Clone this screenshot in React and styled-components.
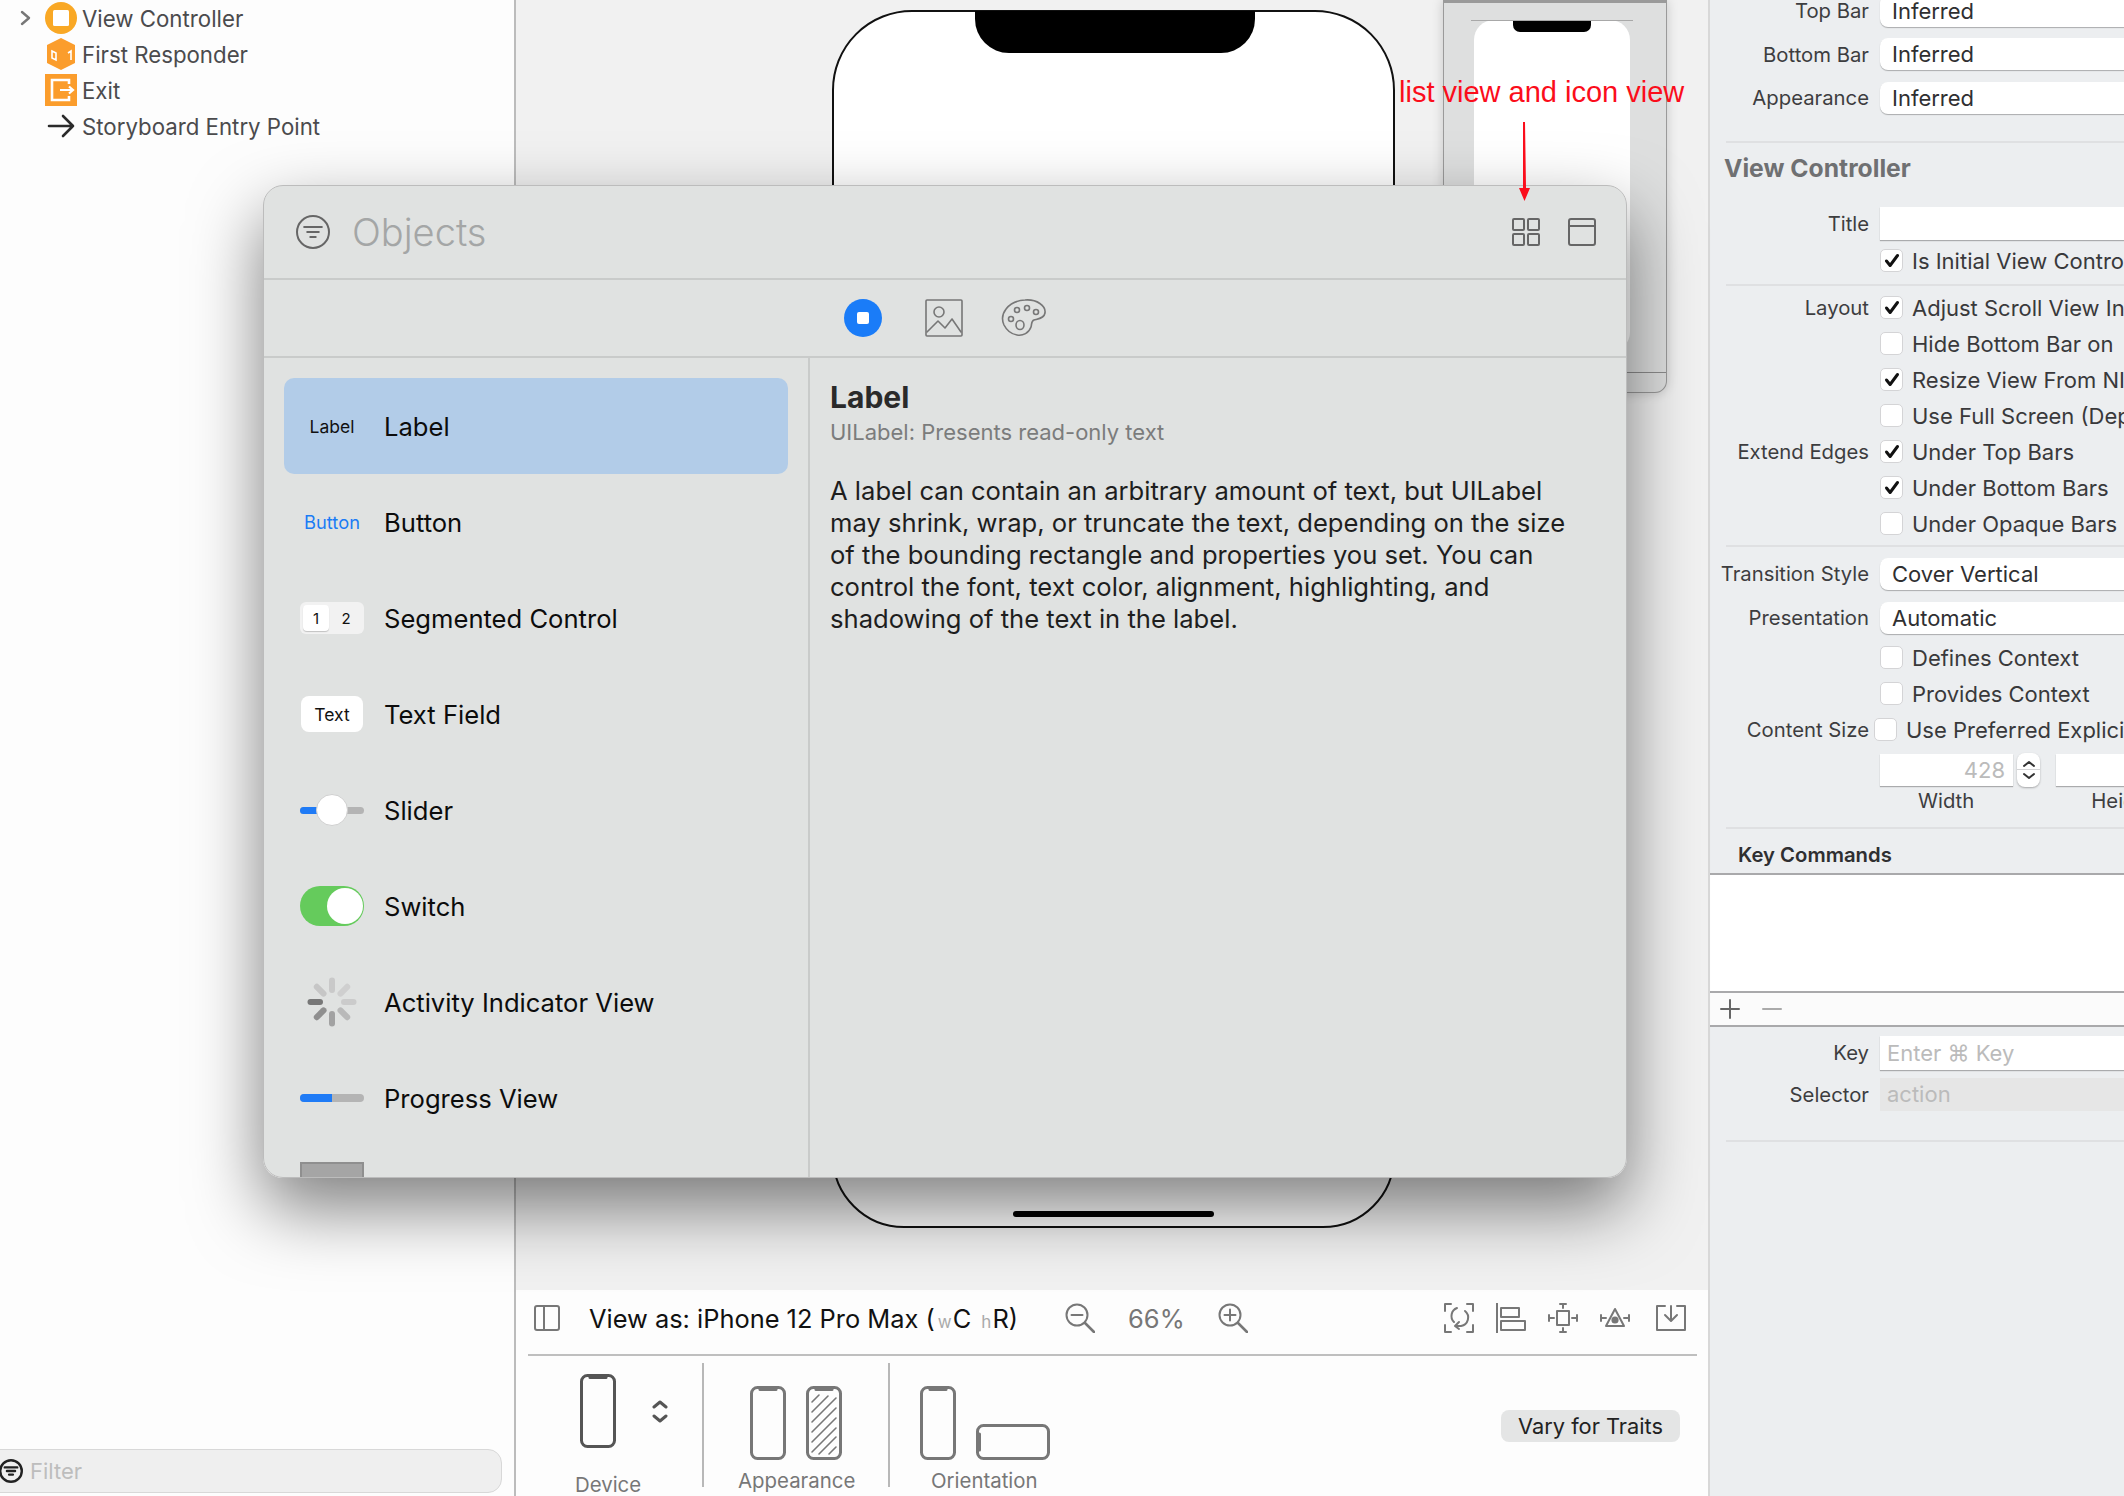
import React from 'react';
import styled, { createGlobalStyle } from 'styled-components';

const GlobalStyle = createGlobalStyle`
  html, body {
    margin: 0;
    padding: 0;
    background: #fff;
  }

  * {
    box-sizing: border-box;
  }
`;

const Shell = styled.div`
  position: relative;
  display: grid;
  grid-template-columns: 516px 1194px 414px;
  width: 2124px;
  height: 1496px;
  overflow: hidden;
  font-family: Inter, 'Liberation Sans', sans-serif;
`;

/* navigator */
const Navigator = styled.aside`
  display: flex;
  flex-direction: column;
  justify-content: space-between;
  background: #fdfdfd;
  border-right: 2px solid #bcbcbc;
`;

const Tree = styled.ul`
  margin: 0;
  padding: 0;
  list-style: none;
`;

const TreeRow = styled.li`
  display: flex;
  align-items: center;
  height: 36px;
  padding-left: 20px;
  font-size: 22.25px;
  color: #4b4b4d;
`;

const Disclosure = styled.span`
  display: flex;
  width: 24px;
`;

const TreeIcon = styled.span`
  display: flex;
  justify-content: center;
  width: 34px;
  margin-right: 4px;
`;

const FilterBar = styled.div`
  display: flex;
  align-items: center;
  gap: 7px;
  height: 44px;
  margin: 0 12px 4px -14px;
  padding-left: 12px;
  background: #efefef;
  border: 1px solid #d8d8d8;
  border-radius: 14px;
  font-size: 22px;
  color: #bdbdbd;
`;

/* canvas */
const Canvas = styled.main`
  display: flex;
  flex-direction: column;
  border-right: 2px solid #d8d8d8;
`;

const Scene = styled.div`
  position: relative;
  height: 1290px;
  overflow: hidden;
  background: #f1f1f1;
`;

const DevicePhone = styled.div`
  position: absolute;
  left: 316px;
  top: 10px;
  width: 563px;
  height: 1218px;
  background: #fff;
  border: 2px solid #111;
  border-radius: 80px 80px 72px 72px;
`;

const Notch = styled.div`
  position: absolute;
  left: 141px;
  top: -1px;
  width: 280px;
  height: 42px;
  background: #000;
  border-radius: 0 0 34px 34px;
`;

const HomeBar = styled.div`
  position: absolute;
  left: 179px;
  bottom: 9px;
  width: 201px;
  height: 6px;
  background: #000;
  border-radius: 3px;
`;

const NextScene = styled.div`
  position: absolute;
  left: 927px;
  top: 0;
  width: 224px;
  height: 393px;
  background: #dedfdf;
  border: 1px solid #9a9a9a;
  border-top-width: 3px;
  border-radius: 0 0 12px 12px;
  box-shadow: 0 0 12px rgba(0, 0, 0, 0.18);
`;

const NextSceneFooter = styled.div`
  position: absolute;
  left: 0;
  right: 0;
  bottom: 0;
  height: 20px;
  border-top: 1px solid #8c8c8c;
`;

const NextSceneRule = styled.div`
  position: absolute;
  left: 27px;
  top: 17px;
  width: 162px;
  height: 1px;
  background: #a8a8a8;
`;

const NextScenePhone = styled.div`
  position: absolute;
  left: 30px;
  top: 17px;
  width: 156px;
  height: 332px;
  background: #fff;
  border-radius: 20px;
`;

const NextSceneNotch = styled.div`
  position: absolute;
  left: 39px;
  top: 0;
  width: 78px;
  height: 12px;
  background: #000;
  border-radius: 0 0 7px 7px;
`;

const Annotation = styled.span`
  position: absolute;
  left: 883px;
  top: 73px;
  font-family: 'Liberation Sans', Arial, sans-serif;
  font-size: 29px;
  line-height: 38px;
  white-space: nowrap;
  color: #fb0d1b;
`;

const AnnotationArrow = styled.svg`
  position: absolute;
  left: 1518px;
  top: 122px;
  z-index: 3;
`;

const BottomBar = styled.div`
  display: flex;
  flex-direction: column;
  flex: 1;
  background: #fdfdfd;
`;

const Toolbar = styled.div`
  display: flex;
  align-items: center;
  height: 66px;
  margin: 0 11px 0 12px;
  padding: 0 11px 8px 6px;
  border-bottom: 2px solid #bfbfbf;
`;

const ViewAs = styled.span`
  margin-left: 29px;
  font-size: 25.4px;
  color: #111;
  white-space: nowrap;
`;

const TraitLetter = styled.span`
  margin: 0 1px 0 3px;
  font-size: 17px;
  color: #aaa;
`;

const ZoomGroup = styled.div`
  display: flex;
  align-items: center;
  margin-left: 47px;
  gap: 33px;
  font-size: 25.5px;
  color: #777;
`;

const ToolGroup = styled.div`
  display: flex;
  align-items: center;
  gap: 22px;
  margin-left: auto;

  svg:last-child {
    margin-left: 4px;
  }
`;

const TraitsRow = styled.div`
  display: flex;
  flex: 1;
  padding-left: 12px;
`;

const TraitSection = styled.div`
  display: flex;
  flex-direction: column;
  width: ${p => p.$w}px;
  padding-left: ${p => p.$pl}px;
  padding-top: ${p => p.$pt}px;
`;

const TraitIcons = styled.div`
  display: flex;
  align-items: ${p => p.$align || 'flex-end'};
  gap: ${p => p.$gap}px;
`;

const TraitCaption = styled.span`
  margin-top: ${p => p.$mt}px;
  margin-left: ${p => p.$ml}px;
  font-size: 20.4px;
  line-height: 24px;
  color: #777;
  white-space: nowrap;
`;

const TraitRule = styled.div`
  width: 2px;
  height: 124px;
  margin-top: 7px;
  background: #b8b8b8;
`;

const VaryButton = styled.button`
  align-self: flex-start;
  height: 32px;
  margin: 54px 28px 0 auto;
  padding: 0 17px;
  background: #e4e5e5;
  border: 0;
  border-radius: 8px;
  font-family: inherit;
  font-size: 21.8px;
  color: #222;
  white-space: nowrap;
`;

/* inspector */
const Inspector = styled.aside`
  overflow: hidden;
  background: #eceef0;
`;

const InspectorBody = styled.div`
  width: 700px;
  margin-top: -11px;
`;

const Row = styled.div`
  display: flex;
  align-items: center;
  height: ${p => p.$h || 36}px;
  margin-top: ${p => p.$mt || 0}px;
`;

const RowLabel = styled.span`
  flex: none;
  width: 159px;
  text-align: right;
  font-size: 20.3px;
  color: #3d3d3f;
  white-space: nowrap;
`;

const Field = styled.div`
  display: flex;
  align-items: center;
  justify-content: ${p => (p.$end ? 'flex-end' : 'flex-start')};
  width: ${p => p.$w || 400}px;
  height: ${p => p.$h || 32}px;
  margin-left: 11px;
  padding: 0 ${p => (p.$end ? 8 : p.$pad || 12)}px;
  background: ${p => (p.$muted ? '#e6e6e6' : '#fff')};
  border-radius: ${p => (p.$square ? 0 : 8)}px;
  box-shadow: ${p => (p.$muted ? 'none' : '0 1px 1px rgba(0, 0, 0, 0.28)')};
  font-size: 22px;
  color: ${p => (p.$dim ? '#bbb' : '#2f2f31')};
  white-space: nowrap;
`;

const Rule = styled.div`
  height: 2px;
  margin: ${p => p.$mt}px 0 ${p => p.$mb}px 16px;
  background: #dfe0e2;
`;

const Heading = styled.h3`
  margin: 10px 0 24px 14px;
  font-size: 24.7px;
  font-weight: 700;
  line-height: 30px;
  color: #6f7072;
`;

const SubHeading = styled.h4`
  margin: 0 0 5px 28px;
  font-size: 20.3px;
  font-weight: 600;
  line-height: 26px;
  color: #2f2f31;
`;

const CheckBox = styled.span`
  display: flex;
  flex: none;
  align-items: center;
  justify-content: center;
  width: 23px;
  height: 23px;
  margin-left: ${p => p.$ml ?? 11}px;
  background: #fff;
  border: 1px solid #d4d4d6;
  border-radius: 5px;
`;

const CheckText = styled.span`
  margin-left: 9px;
  font-size: 22px;
  color: #39393b;
  white-space: nowrap;
`;

const Stepper = styled.div`
  position: relative;
  display: flex;
  flex: none;
  align-items: center;
  justify-content: center;
  width: 23px;
  height: 34px;
  margin: 0 5px 0 4px;
  background: #fff;
  border-radius: 8px;
  box-shadow: 0 1px 2px rgba(0, 0, 0, 0.3);

  &::after {
    content: '';
    position: absolute;
    left: 0;
    right: 0;
    top: 16.5px;
    height: 1px;
    background: #d4d4d6;
  }
`;

const CaptionRow = styled.div`
  display: flex;
  height: 30px;
  line-height: 30px;
  font-size: 20.3px;
  color: #3d3d3f;
`;

const CaptionCell = styled.span`
  margin-left: ${p => p.$ml}px;
`;

const CommandTable = styled.div`
  height: 120px;
  background: #fff;
  border-top: 2px solid #a9a9ab;
  border-bottom: 2px solid #a9a9ab;
`;

const CommandBar = styled.div`
  display: flex;
  align-items: center;
  gap: 22px;
  height: 34px;
  padding-left: 10px;
  background: #fbfbfb;
  border-bottom: 2px solid #a9a9ab;
`;

/* object library */
const Library = styled.section`
  position: absolute;
  left: 263px;
  top: 185px;
  z-index: 2;
  display: flex;
  flex-direction: column;
  width: 1364px;
  height: 993px;
  overflow: hidden;
  background: #e0e2e1;
  border: 1px solid #bcbcbc;
  border-radius: 20px;
`;

const LibraryShadow = styled.div`
  position: absolute;
  left: 263px;
  top: 185px;
  z-index: 1;
  width: 1364px;
  height: 993px;
  border-radius: 20px;
  box-shadow: 0 30px 70px rgba(0, 0, 0, 0.5);
`;

const LibraryHeader = styled.header`
  display: flex;
  flex: none;
  align-items: center;
  height: 94px;
  padding: 0 30px 0 32px;
  border-bottom: 2px solid #c9cbca;
`;

const LibraryTitle = styled.h2`
  margin: 0 0 0 22px;
  font-size: 38px;
  font-weight: 300;
  color: #a4a6a6;
`;

const HeaderIcons = styled.div`
  display: flex;
  gap: 28px;
  margin-left: auto;
`;

const LibraryTabs = styled.nav`
  display: flex;
  flex: none;
  align-items: center;
  justify-content: center;
  gap: 37px;
  height: 78px;
  border-bottom: 2px solid #c9cbca;
`;

const ObjectsTab = styled.svg`
  margin-right: 6px;
`;

const LibraryBody = styled.div`
  display: grid;
  flex: 1;
  grid-template-columns: 546px 1fr;
  min-height: 0;
`;

const ObjectList = styled.ul`
  margin: 0;
  padding: 20px 20px 0 20px;
  list-style: none;
  border-right: 2px solid #c9cbca;
`;

const ObjectRow = styled.li`
  display: flex;
  align-items: center;
  gap: 20px;
  height: 96px;
  padding-left: 16px;
  background: ${p => (p.$selected ? '#b2cce8' : 'transparent')};
  border-radius: 10px;
  font-size: 25.6px;
  color: #0c0c0c;
`;

const ObjectIcon = styled.span`
  position: relative;
  display: flex;
  flex: none;
  align-items: center;
  justify-content: center;
  width: 64px;
  height: 64px;
  font-size: ${p => p.$size || 17.5}px;
  color: ${p => p.$color || '#111'};
`;

const Segmented = styled.span`
  display: flex;
  align-items: center;
  width: 64px;
  height: 32px;
  padding: 3px;
  background: #f2f2f2;
  border-radius: 6px;
  font-size: 15px;
`;

const Segment = styled.span`
  display: flex;
  align-items: center;
  justify-content: center;
  width: 26px;
  height: 26px;
  margin-right: ${p => (p.$active ? 4 : 0)}px;
  background: ${p => (p.$active ? '#fff' : 'transparent')};
  border-radius: 4px;
  box-shadow: ${p => (p.$active ? '0 1px 1px rgba(0, 0, 0, 0.2)' : 'none')};
`;

const MiniField = styled.span`
  display: flex;
  align-items: center;
  justify-content: center;
  width: 62px;
  height: 36px;
  background: #fff;
  border-radius: 8px;
`;

const Track = styled.span`
  display: flex;
  width: 64px;
  height: ${p => p.$h}px;
  overflow: hidden;
  background: #b4b4b4;
  border-radius: 4px;
`;

const TrackFill = styled.span`
  width: 50%;
  background: #1f7bf6;
`;

const SliderKnob = styled.span`
  position: absolute;
  left: 16px;
  top: 16px;
  width: 32px;
  height: 32px;
  background: #fff;
  border: 1px solid #d0d0d0;
  border-radius: 50%;
`;

const SwitchTrack = styled.span`
  display: flex;
  justify-content: flex-end;
  width: 64px;
  height: 40px;
  padding: 2px 1px;
  background: #65cb5c;
  border-radius: 20px;
`;

const SwitchKnob = styled.span`
  width: 36px;
  height: 36px;
  background: #fff;
  border-radius: 50%;
`;

const MiniView = styled.span`
  width: 64px;
  height: 64px;
  background: #a5a5a5;
  border: 2px solid #8f8f8f;
`;

const Detail = styled.article`
  padding: 21px 32px 0 20px;
`;

const DetailTitle = styled.h3`
  margin: 0;
  font-size: 30px;
  font-weight: 700;
  line-height: 36px;
  color: #2a2a2a;
`;

const DetailClass = styled.p`
  margin: 2px 0 28px;
  font-size: 22px;
  line-height: 30px;
  color: #7b7c7c;
`;

const DetailBody = styled.p`
  margin: 0;
  font-size: 25.6px;
  line-height: 32px;
  color: #1e1e1e;
`;

const Glyph = ({ w, h, color = '#777', sw = 2, children }) => (
  <svg width={w} height={h} viewBox={`0 0 ${w} ${h}`} fill="none" stroke={color} strokeWidth={sw} strokeLinecap="round" strokeLinejoin="round">
    {children}
  </svg>
);

const PhoneIcon = ({ color = '#777', hatch }) => (
  <Glyph w={36} h={74} color={color} sw={3}>
    <rect x="1.5" y="1.5" width="33" height="71" rx="6" />
    <path d="M10 3.5h16" strokeWidth="3" />
    {hatch && (
      <path
        d="M6 16l7-7M6 26l16-16M6 36l24-24M6 46l24-24M6 56l24-24M6 66l24-24M13 68l17-17M23 68l7-7"
        strokeWidth="1.6"
      />
    )}
  </Glyph>
);

const LandscapeIcon = () => (
  <Glyph w={74} h={36} sw={3}>
    <rect x="1.5" y="1.5" width="71" height="33" rx="6" />
    <path d="M3.5 10v16" />
  </Glyph>
);

const FilterGlyph = ({ size = 34, color = '#666', sw = 2 }) => (
  <Glyph w={size} h={size} color={color} sw={sw}>
    <circle cx={size / 2} cy={size / 2} r={size / 2 - sw / 2} />
    <path d={`M${size * 0.24} ${size * 0.35}h${size * 0.52}M${size * 0.33} ${size * 0.5}h${size * 0.34}M${size * 0.42} ${size * 0.65}h${size * 0.16}`} />
  </Glyph>
);

const Check = () => (
  <svg width="16" height="15" viewBox="0 0 16 15" fill="none" stroke="#111" strokeWidth="3" strokeLinecap="round" strokeLinejoin="round">
    <path d="M2.5 8l3.6 4.5L13.5 2.5" />
  </svg>
);

const Chevrons = ({ color = '#555', w = 16, gap = 7, sw = 3 }) => (
  <Glyph w={w} h={w + gap} color={color} sw={sw}>
    <path d={`M2 ${w / 2 - 1}l${w / 2 - 2} -${w / 2 - 3} ${w / 2 - 2} ${w / 2 - 3}`} />
    <path d={`M2 ${w / 2 + gap + 1}l${w / 2 - 2} ${w / 2 - 3} ${w / 2 - 2} -${w / 2 - 3}`} />
  </Glyph>
);

const Spinner = () => {
  const shades = ['#c9c9c9', '#cfcfcf', '#cbcbcb', '#b9b9b9', '#a2a2a2', '#8f8f8f', '#777', '#c6c6c6'];
  return (
    <svg width="50" height="50" viewBox="0 0 50 50" strokeWidth="6" strokeLinecap="round">
      {shades.map((shade, i) => (
        <line key={i} x1="25" y1="3.5" x2="25" y2="13" stroke={shade} transform={`rotate(${i * 45} 25 25)`} />
      ))}
    </svg>
  );
};

const ScopeIcon = ({ plus }) => (
  <Glyph w={30} h={30} color="#777" sw={2}>
    <circle cx="12" cy="12" r="10.5" />
    <path d="M20 20l9 9" strokeWidth="2.6" />
    <path d={plus ? 'M6.5 12h11M12 6.5v11' : 'M6.5 12h11'} />
  </Glyph>
);

const selectRows = [
  ['Top Bar', 'Inferred'],
  ['Bottom Bar', 'Inferred'],
  ['Appearance', 'Inferred'],
];

const layoutRows = [
  ['Layout', 'Adjust Scroll View Insets', true],
  ['', 'Hide Bottom Bar on', false],
  ['', 'Resize View From NIB', true],
  ['', 'Use Full Screen (Deprecated)', false],
  ['Extend Edges', 'Under Top Bars', true],
  ['', 'Under Bottom Bars', true],
  ['', 'Under Opaque Bars', false],
];

const Navigation = () => (
  <Navigator>
    <Tree>
      <TreeRow>
        <Disclosure>
          <Glyph w={12} h={16} color="#777" sw={2.4}>
            <path d="M2 2l7 6-7 6" />
          </Glyph>
        </Disclosure>
        <TreeIcon>
          <svg width="32" height="32" viewBox="0 0 32 32">
            <circle cx="16" cy="16" r="16" fill="#f9a825" />
            <rect x="8" y="8" width="16" height="16" rx="1.5" fill="#fff" />
          </svg>
        </TreeIcon>
        View Controller
      </TreeRow>
      <TreeRow>
        <Disclosure />
        <TreeIcon>
          <svg width="28" height="32" viewBox="0 0 28 32">
            <path d="M14 0l14 7v18l-14 7-14-7V7z" fill="#fb9d2c" />
            <path d="M5 13l4 2v7l-4-2zM21 15l3-2v9" fill="none" stroke="#fff" strokeWidth="1.6" />
          </svg>
        </TreeIcon>
        First Responder
      </TreeRow>
      <TreeRow>
        <Disclosure />
        <TreeIcon>
          <svg width="32" height="32" viewBox="0 0 32 32">
            <rect width="32" height="32" fill="#fb9d2c" />
            <path d="M24 10V6H7v20h17v-4" fill="none" stroke="#fff" strokeWidth="2.6" />
            <path d="M15 16h13M24 12.5l4 3.5-4 3.5" fill="none" stroke="#fff" strokeWidth="2.2" />
          </svg>
        </TreeIcon>
        Exit
      </TreeRow>
      <TreeRow>
        <Disclosure />
        <TreeIcon>
          <Glyph w={28} h={24} color="#2b2b2b" sw={2.6}>
            <path d="M2 12h24M16 2l10 10-10 10" />
          </Glyph>
        </TreeIcon>
        Storyboard Entry Point
      </TreeRow>
    </Tree>
    <FilterBar>
      <FilterGlyph size={24} color="#222" sw={2.4} />
      Filter
    </FilterBar>
  </Navigator>
);

const Stage = () => (
  <Scene>
    <DevicePhone>
      <Notch />
      <HomeBar />
    </DevicePhone>
    <NextScene>
      <NextScenePhone>
        <NextSceneNotch />
      </NextScenePhone>
      <NextSceneRule />
      <NextSceneFooter />
    </NextScene>
    <Annotation>list view and icon view</Annotation>
  </Scene>
);

const ToolIcons = () => (
  <ToolGroup>
    <Glyph w={30} h={30} sw={2}>
      <path d="M1 8V1h6M23 1h6v7M1 22v7h6M23 29h6v-7" />
      <path d="M21 8a8.5 8.5 0 0 1-4 15l-5 0M15 19l-4 4 4 3M10 19a8.5 8.5 0 0 1 3-14" />
    </Glyph>
    <Glyph w={30} h={30} sw={2}>
      <path d="M1 0v30" />
      <rect x="5" y="5" width="18" height="9" />
      <rect x="5" y="18" width="24" height="9" />
    </Glyph>
    <Glyph w={30} h={30} sw={2}>
      <rect x="9" y="8" width="12" height="14" />
      <path d="M15 1v4M12 1h6M15 25v4M12 29h6M1 12v6M1 15h5M29 12v6M24 15h5" />
    </Glyph>
    <Glyph w={30} h={30} sw={2}>
      <path d="M15 6l9 17H6z" />
      <circle cx="15" cy="17" r="2.6" fill="#777" />
      <path d="M1 12v6M1 15h5M29 12v6M24 15h5" />
    </Glyph>
    <Glyph w={30} h={26} sw={2}>
      <path d="M9 1H1v24h28V1h-8" />
      <path d="M15 1v14M9 10l6 6 6-6" />
    </Glyph>
  </ToolGroup>
);

const CanvasBar = () => (
  <BottomBar>
    <Toolbar>
      <Glyph w={26} h={26} sw={2}>
        <rect x="1" y="1" width="24" height="24" rx="2" />
        <path d="M10 1v24" />
      </Glyph>
      <ViewAs>
        View as: iPhone 12 Pro Max (<TraitLetter>w</TraitLetter>C <TraitLetter>h</TraitLetter>R)
      </ViewAs>
      <ZoomGroup>
        <ScopeIcon />
        66%
        <ScopeIcon plus />
      </ZoomGroup>
      <ToolIcons />
    </Toolbar>
    <TraitsRow>
      <TraitSection $w={174} $pl={52} $pt={18}>
        <TraitIcons $gap={36} $align="center">
          <PhoneIcon color="#555" />
          <Chevrons />
        </TraitIcons>
        <TraitCaption $mt={25} $ml={-5}>Device</TraitCaption>
      </TraitSection>
      <TraitRule />
      <TraitSection $w={184} $pl={46} $pt={30}>
        <TraitIcons $gap={20}>
          <PhoneIcon />
          <PhoneIcon hatch />
        </TraitIcons>
        <TraitCaption $mt={9} $ml={-12}>Appearance</TraitCaption>
      </TraitSection>
      <TraitRule />
      <TraitSection $w={200} $pl={30} $pt={30}>
        <TraitIcons $gap={20}>
          <PhoneIcon />
          <LandscapeIcon />
        </TraitIcons>
        <TraitCaption $mt={9} $ml={11}>Orientation</TraitCaption>
      </TraitSection>
      <VaryButton>Vary for Traits</VaryButton>
    </TraitsRow>
  </BottomBar>
);

const AttributesPanel = () => (
  <Inspector>
    <InspectorBody>
      {selectRows.map(([label, value]) => (
        <Row key={label} $h={43.5}>
          <RowLabel>{label}</RowLabel>
          <Field>{value}</Field>
        </Row>
      ))}
      <Rule $mt={21} $mb={0} />
      <Heading>View Controller</Heading>
      <Row $h={33}>
        <RowLabel>Title</RowLabel>
        <Field $square $h={33} />
      </Row>
      <Row $mt={3}>
        <RowLabel />
        <CheckBox>
          <Check />
        </CheckBox>
        <CheckText>Is Initial View Controller</CheckText>
      </Row>
      <Rule $mt={5} $mb={4} />
      {layoutRows.map(([label, text, checked]) => (
        <Row key={text}>
          <RowLabel>{label}</RowLabel>
          <CheckBox>{checked && <Check />}</CheckBox>
          <CheckText>{text}</CheckText>
        </Row>
      ))}
      <Rule $mt={3} $mb={5} />
      <Row $h={44}>
        <RowLabel>Transition Style</RowLabel>
        <Field>Cover Vertical</Field>
      </Row>
      <Row $h={44}>
        <RowLabel>Presentation</RowLabel>
        <Field>Automatic</Field>
      </Row>
      <Row>
        <RowLabel />
        <CheckBox />
        <CheckText>Defines Context</CheckText>
      </Row>
      <Row>
        <RowLabel />
        <CheckBox />
        <CheckText>Provides Context</CheckText>
      </Row>
      <Row>
        <RowLabel>Content Size</RowLabel>
        <CheckBox $ml={5} />
        <CheckText>Use Preferred Explicit Size</CheckText>
      </Row>
      <Row $h={32} $mt={6}>
        <RowLabel />
        <Field $square $end $dim $w={133}>428</Field>
        <Stepper>
          <Chevrons color="#333" w={14} gap={6} sw={2} />
        </Stepper>
        <Field $square $w={200} />
      </Row>
      <CaptionRow>
        <CaptionCell $ml={208}>Width</CaptionCell>
        <CaptionCell $ml={117}>Height</CaptionCell>
      </CaptionRow>
      <Rule $mt={11} $mb={13} />
      <SubHeading>Key Commands</SubHeading>
      <CommandTable />
      <CommandBar>
        <Glyph w={20} h={20} color="#666" sw={2}>
          <path d="M10 1v18M1 10h18" />
        </Glyph>
        <Glyph w={20} h={20} color="#aaa" sw={2}>
          <path d="M1 10h18" />
        </Glyph>
      </CommandBar>
      <Row $h={34} $mt={9}>
        <RowLabel>Key</RowLabel>
        <Field $square $dim $h={34} $pad={7}>Enter ⌘ Key</Field>
      </Row>
      <Row $h={33} $mt={8}>
        <RowLabel>Selector</RowLabel>
        <Field $square $dim $muted $h={33} $pad={7}>action</Field>
      </Row>
      <Rule $mt={29} $mb={0} />
    </InspectorBody>
  </Inspector>
);

const ObjectLibrary = () => (
  <Library>
    <LibraryHeader>
      <FilterGlyph />
      <LibraryTitle>Objects</LibraryTitle>
      <HeaderIcons>
        <Glyph w={28} h={28} color="#666" sw={2}>
          <rect x="1" y="1" width="11" height="11" rx="1" />
          <rect x="16" y="1" width="11" height="11" rx="1" />
          <rect x="1" y="16" width="11" height="11" rx="1" />
          <rect x="16" y="16" width="11" height="11" rx="1" />
        </Glyph>
        <Glyph w={28} h={28} color="#666" sw={2}>
          <rect x="1" y="1" width="26" height="26" rx="2" />
          <path d="M1 8h26" />
        </Glyph>
      </HeaderIcons>
    </LibraryHeader>
    <LibraryTabs>
      <ObjectsTab width="38" height="38" viewBox="0 0 38 38">
        <circle cx="19" cy="19" r="19" fill="#1a7cf8" />
        <rect x="13" y="13" width="12" height="12" rx="2" fill="#fff" />
      </ObjectsTab>
      <Glyph w={38} h={38} sw={1.6}>
        <rect x="1" y="1" width="36" height="36" rx="1" />
        <circle cx="14" cy="13" r="5" />
        <path d="M2 33l11-11 7 7 7-9 9 13" />
      </Glyph>
      <Glyph w={46} h={38} sw={1.6}>
        <path d="M4 26C-1 15 8 2 25 1c12-1 21 6 20 13-1 6-8 6-11 7-3 1-2 4-3 7-2 6-8 9-14 8-6-1-10-4-13-10z" />
        <circle cx="11" cy="20" r="2.5" />
        <circle cx="17" cy="11" r="2.5" />
        <circle cx="27" cy="9" r="2.5" />
        <circle cx="36" cy="13" r="2.5" />
        <ellipse cx="20" cy="26" rx="4" ry="4.5" />
      </Glyph>
    </LibraryTabs>
    <LibraryBody>
      <ObjectList>
        <ObjectRow $selected>
          <ObjectIcon>Label</ObjectIcon>
          Label
        </ObjectRow>
        <ObjectRow>
          <ObjectIcon $color="#1b7cf5" $size={18.3}>Button</ObjectIcon>
          Button
        </ObjectRow>
        <ObjectRow>
          <ObjectIcon>
            <Segmented>
              <Segment $active>1</Segment>
              <Segment>2</Segment>
            </Segmented>
          </ObjectIcon>
          Segmented Control
        </ObjectRow>
        <ObjectRow>
          <ObjectIcon>
            <MiniField>Text</MiniField>
          </ObjectIcon>
          Text Field
        </ObjectRow>
        <ObjectRow>
          <ObjectIcon>
            <Track $h={7}>
              <TrackFill />
            </Track>
            <SliderKnob />
          </ObjectIcon>
          Slider
        </ObjectRow>
        <ObjectRow>
          <ObjectIcon>
            <SwitchTrack>
              <SwitchKnob />
            </SwitchTrack>
          </ObjectIcon>
          Switch
        </ObjectRow>
        <ObjectRow>
          <ObjectIcon>
            <Spinner />
          </ObjectIcon>
          Activity Indicator View
        </ObjectRow>
        <ObjectRow>
          <ObjectIcon>
            <Track $h={8}>
              <TrackFill />
            </Track>
          </ObjectIcon>
          Progress View
        </ObjectRow>
        <ObjectRow>
          <ObjectIcon>
            <MiniView />
          </ObjectIcon>
        </ObjectRow>
      </ObjectList>
      <Detail>
        <DetailTitle>Label</DetailTitle>
        <DetailClass>UILabel: Presents read-only text</DetailClass>
        <DetailBody>
          A label can contain an arbitrary amount of text, but UILabel may shrink, wrap, or truncate
          the text, depending on the size of the bounding rectangle and properties you set. You can
          control the font, text color, alignment, highlighting, and shadowing of the text in the
          label.
        </DetailBody>
      </Detail>
    </LibraryBody>
  </Library>
);

const App = () => (
  <>
    <GlobalStyle />
    <Shell>
      <Navigation />
      <Canvas>
        <Stage />
        <CanvasBar />
      </Canvas>
      <AttributesPanel />
      <LibraryShadow />
      <ObjectLibrary />
      <AnnotationArrow width="12" height="80" viewBox="0 0 12 80">
        <path d="M5 0l2 0 1 66h4l-5.5 13L1 66h4z" fill="#fb0d1b" />
      </AnnotationArrow>
    </Shell>
  </>
);

export default App;
